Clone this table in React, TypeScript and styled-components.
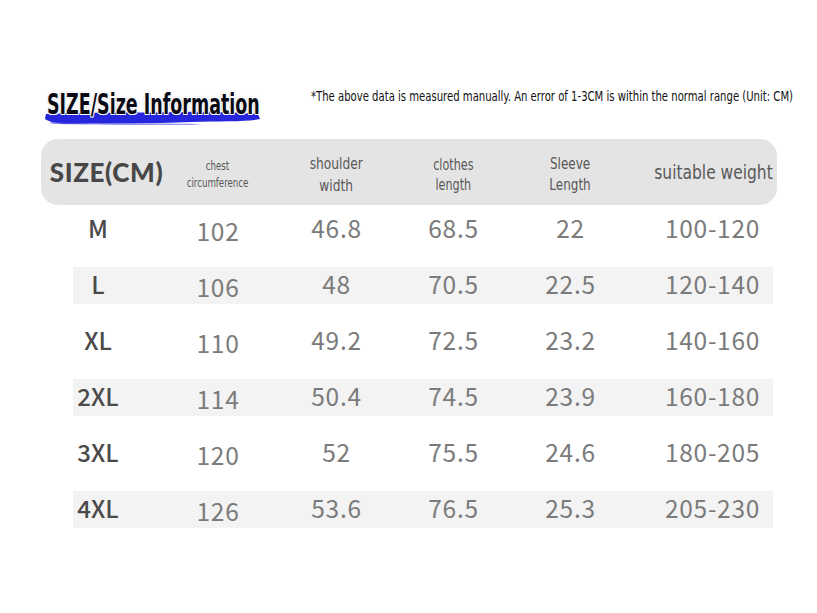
import React from 'react';
import styled, { createGlobalStyle } from 'styled-components';

const CONDENSED = `'DejaVu Sans', 'Liberation Sans', sans-serif`;
const NUMERIC = `'Noto Sans CJK SC', 'Noto Sans', sans-serif`;

interface SizeRow {
  size: string;
  values: string[];
}

const ROWS: SizeRow[] = [
  { size: 'M', values: ['102', '46.8', '68.5', '22', '100-120'] },
  { size: 'L', values: ['106', '48', '70.5', '22.5', '120-140'] },
  { size: 'XL', values: ['110', '49.2', '72.5', '23.2', '140-160'] },
  { size: '2XL', values: ['114', '50.4', '74.5', '23.9', '160-180'] },
  { size: '3XL', values: ['120', '52', '75.5', '24.6', '180-205'] },
  { size: '4XL', values: ['126', '53.6', '76.5', '25.3', '205-230'] },
];

const GlobalStyle = createGlobalStyle`
  html, body {
    margin: 0;
    padding: 0;
    background: #ffffff;
  }
`;

const Page = styled.div`
  width: 817px;
  height: 613px;
  padding-top: 87px;
  box-sizing: border-box;
  overflow: hidden;
`;

const TitleBar = styled.div`
  display: flex;
  align-items: flex-start;
  padding-left: 47px;
  height: 52px;
`;

const TitleWrap = styled.div`
  position: relative;
  width: 264px;
  flex-shrink: 0;
`;

const Brush = styled.svg`
  position: absolute;
  left: -3px;
  top: 24px;
  width: 217px;
  height: 14px;
`;

const Title = styled.h1`
  position: relative;
  display: inline-block;
  margin: 0;
  font-family: ${CONDENSED};
  font-stretch: condensed;
  font-weight: 700;
  font-size: 29px;
  line-height: 34px;
  color: #0a0a14;
  white-space: nowrap;
  transform: scaleX(0.67);
  transform-origin: left center;
  text-shadow: -1px -1px 0 #fff, 1px -1px 0 #fff, -1px 1px 0 #fff, 1px 1px 0 #fff,
    0 0 3px rgba(0, 0, 0, 0.45);
`;

const Note = styled.p`
  display: inline-block;
  flex-shrink: 0;
  margin: 0;
  padding-top: 1px;
  font-family: ${CONDENSED};
  font-stretch: condensed;
  font-size: 13.5px;
  line-height: 17px;
  color: #111;
  white-space: nowrap;
  transform: scaleX(0.83);
  transform-origin: left center;
`;

const Table = styled.div`
  display: flex;
  flex-direction: column;
`;

const Columns = styled.div`
  display: grid;
  grid-template-columns: 85px 120px 117px 117px 117px 144px;
  align-items: center;
`;

const Head = styled(Columns)`
  margin-left: 41px;
  width: 736px;
  height: 66px;
  padding-left: 32px;
  box-sizing: border-box;
  border-radius: 17px;
  background: #e4e4e4;
`;

const Cell = styled.div<{ $last?: boolean }>`
  display: flex;
  align-items: center;
  justify-content: ${(p) => (p.$last ? 'flex-end' : 'center')};
  width: ${(p) => (p.$last ? 'auto' : '50px')};
  justify-self: ${(p) => (p.$last ? 'stretch' : 'center')};
  white-space: nowrap;
`;

const FirstCell = styled(Cell)`
  justify-self: start;
`;

const SizeHeading = styled.span`
  margin-left: 17px;
  font-family: 'Lato', sans-serif;
  font-weight: 900;
  font-size: 26px;
  letter-spacing: 0.6px;
  color: #474747;
`;

const HeadLabel = styled.span<{ $size: number; $scale: number; $lh: number }>`
  display: inline-block;
  padding-top: 5px;
  font-family: ${CONDENSED};
  font-stretch: condensed;
  font-size: ${(p) => p.$size}px;
  line-height: ${(p) => p.$lh}px;
  color: #585858;
  text-align: center;
  white-space: nowrap;
  transform: scaleX(${(p) => p.$scale});
`;

const WeightLabel = styled(HeadLabel)`
  padding-top: 0;
  transform-origin: right center;
`;

const Body = styled.div`
  margin-top: -3px;
`;

const Row = styled(Columns)<{ $striped: boolean }>`
  margin-left: 73px;
  width: 700px;
  height: 56px;
  background: ${(p) => (p.$striped ? '#f3f3f3' : 'transparent')};
  background-clip: content-box;
  padding: 9px 0 10px;
  box-sizing: border-box;
`;

const SizeLabel = styled.span`
  margin: -2px 0 2px;
  font-family: ${NUMERIC};
  font-weight: 500;
  font-size: 24px;
  color: #4a4a4a;
`;

const Value = styled.span<{ $drop?: boolean }>`
  margin: ${(p) => (p.$drop ? '2px 0 0' : '-2px 0 2px')};
  font-family: ${NUMERIC};
  font-size: 24.5px;
  letter-spacing: 0.7px;
  color: #7b7b7b;
`;

const LastValue = styled(Value)`
  margin-right: 13px;
`;

const headings = [
  { text: ['chest', 'circumference'], size: 12, scale: 0.8, lh: 17 },
  { text: ['shoulder', 'width'], size: 16, scale: 0.85, lh: 22 },
  { text: ['clothes', 'length'], size: 15, scale: 0.83, lh: 20 },
  { text: ['Sleeve', 'Length'], size: 15.5, scale: 0.86, lh: 21 },
];

const Brushstroke = (): JSX.Element => (
  <Brush viewBox="0 0 220 14" preserveAspectRatio="none">
    <path
      d="M2 3 C40 1 90 2 140 1 C175 0 200 2 217 3 L219 8 C205 11 180 10 150 11 C110 13 60 12 20 13 C10 12 4 10 1 8 Z"
      fill="#2626dc"
    />
    <path d="M6 11 C40 13 100 12 160 13 L150 14 C100 14 40 14 8 13 Z" fill="#5050e6" opacity="0.6" />
  </Brush>
);

const App = (): JSX.Element => {
  return (
    <Page>
      <GlobalStyle />
      <TitleBar>
        <TitleWrap>
          <Brushstroke />
          <Title>SIZE/Size Information</Title>
        </TitleWrap>
        <Note>*The above data is measured manually. An error of 1-3CM is within the normal range (Unit: CM)</Note>
      </TitleBar>
      <Table>
        <Head>
          <FirstCell>
            <SizeHeading>SIZE(CM)</SizeHeading>
          </FirstCell>
          {headings.map((h) => (
            <Cell key={h.text[0]}>
              <HeadLabel $size={h.size} $scale={h.scale} $lh={h.lh}>
                {h.text[0]}
                <br />
                {h.text[1]}
              </HeadLabel>
            </Cell>
          ))}
          <Cell $last>
            <WeightLabel $size={20} $scale={0.86} $lh={24}>
              suitable weight
            </WeightLabel>
          </Cell>
        </Head>
        <Body>
          {ROWS.map((row, i) => (
            <Row key={row.size} $striped={i % 2 === 1}>
              <FirstCell>
                <SizeLabel>{row.size}</SizeLabel>
              </FirstCell>
              {row.values.slice(0, 4).map((v, j) => (
                <Cell key={j}>
                  <Value $drop={j === 0}>{v}</Value>
                </Cell>
              ))}
              <Cell $last>
                <LastValue>{row.values[4]}</LastValue>
              </Cell>
            </Row>
          ))}
        </Body>
      </Table>
    </Page>
  );
};

export default App;
